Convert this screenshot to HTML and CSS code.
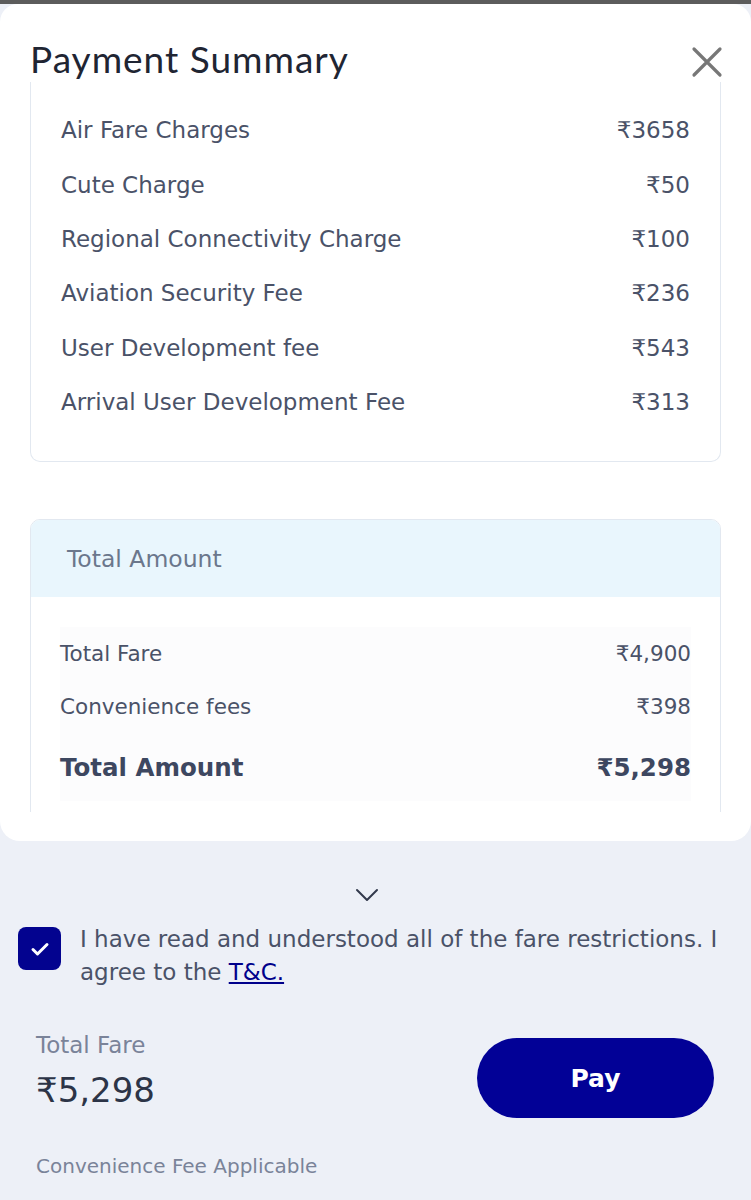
FILE: index.html
```html
<!DOCTYPE html>
<html lang="en">

<head>
    <meta charset="UTF-8">
    <meta name="viewport" content="width=device-width, initial-scale=1.0">
    <title>Payment Summary</title>
    <link rel="stylesheet" href="styles.css">
</head>

<body>
    <div class="dim"></div>
    <div class="sheet">
        <div class="sheet-head">
            <h1 class="sheet-title">Payment Summary</h1>
            <button class="close-btn" aria-label="Close">
                <svg width="32" height="32" viewBox="0 0 32 32">
                    <path d="M3 3L29 29M29 3L3 29" stroke="#777" stroke-width="3.2" stroke-linecap="round" fill="none" />
                </svg>
            </button>
        </div>
        <div class="sheet-scroll">
            <div class="card card-charges">
                <div class="row"><span>Air Fare Charges</span><span>₹3658</span></div>
                <div class="row"><span>Cute Charge</span><span>₹50</span></div>
                <div class="row"><span>Regional Connectivity Charge</span><span>₹100</span></div>
                <div class="row"><span>Aviation Security Fee</span><span>₹236</span></div>
                <div class="row"><span>User Development fee</span><span>₹543</span></div>
                <div class="row"><span>Arrival User Development Fee</span><span>₹313</span></div>
            </div>
            <div class="card card-total">
                <div class="card-total-head">Total Amount</div>
                <div class="card-total-body">
                    <div class="total-box">
                        <div class="row row-sm"><span>Total Fare</span><span>₹4,900</span></div>
                        <div class="row row-sm"><span>Convenience fees</span><span>₹398</span></div>
                        <div class="row row-strong"><span>Total Amount</span><span>₹5,298</span></div>
                    </div>
                </div>
            </div>
        </div>
    </div>

    <div class="footer">
        <div class="chevron">
            <svg width="24" height="14" viewBox="0 0 24 14">
                <path d="M2 2L12 12L22 2" stroke="#333a4d" stroke-width="2" fill="none" stroke-linecap="round" stroke-linejoin="round" />
            </svg>
        </div>
        <label class="agree">
            <span class="checkbox">
                <svg width="22" height="18" viewBox="0 0 22 18">
                    <path d="M4 9.5L8.5 14L18 4.5" stroke="#fff" stroke-width="3" fill="none" stroke-linecap="round" stroke-linejoin="round" />
                </svg>
            </span>
            <span class="agree-text">I have read and understood all of the fare restrictions. I agree to the <a href="#">T&amp;C.</a></span>
        </label>
        <div class="pay-bar">
            <div class="pay-info">
                <div class="pay-label">Total Fare</div>
                <div class="pay-amount">₹5,298</div>
            </div>
            <button class="pay-btn">Pay</button>
        </div>
        <div class="fee-note">Convenience Fee Applicable</div>
    </div>
</body>

</html>
```

FILE: styles.css
```css
* {
    margin: 0;
    padding: 0;
    box-sizing: border-box;
}

body {
    background: #edf0f7;
    font-family: "DejaVu Sans", "Noto Sans", sans-serif;
    color: #4a5268;
    overflow: hidden;
}

.dim {
    height: 4px;
    background: #5c5c5c;
}

.sheet {
    background: #fff;
    border-radius: 18px 18px 20px 20px;
    height: 837px;
    display: flex;
    flex-direction: column;
}

.sheet-head {
    display: flex;
    justify-content: space-between;
    align-items: flex-start;
    padding: 30px 28px 0 30px;
    height: 78px;
}

.sheet-title {
    font-family: Lato, sans-serif;
    font-weight: 400;
    font-size: 37px;
    line-height: 50px;
    color: #1f2533;
    letter-spacing: 1px;
}

.close-btn {
    border: none;
    background: none;
    padding: 0;
    margin-top: 12px;
    width: 32px;
    height: 32px;
}

.sheet-scroll {
    height: 730px;
    overflow: hidden;
    padding: 0 30px;
}

.card {
    border: 1px solid #e2e8f0;
    border-radius: 10px;
}

.card-charges {
    border-top: none;
    border-radius: 0 0 10px 10px;
    padding: 21px 30px 32px 30px;
}

.row {
    display: flex;
    justify-content: space-between;
    align-items: center;
    height: 54.4px;
    font-size: 23px;
}

.card-total {
    margin-top: 57px;
    overflow: hidden;
}

.card-total-head {
    background: #e9f6fd;
    height: 77px;
    display: flex;
    align-items: center;
    padding-left: 36px;
    font-size: 23.5px;
    color: #6b778c;
}

.card-total-body {
    padding: 30px 29px 40px 29px;
}

.total-box {
    background: #fcfcfd;
}

.row-sm {
    font-size: 21.5px;
    height: 54px;
}

.row-sm:first-child {
    height: 52px;
}

.row-strong {
    font-size: 24.5px;
    font-weight: 700;
    color: #3d4760;
    height: 68px;
}

.footer {
    padding: 0 18px;
}

.chevron {
    display: flex;
    justify-content: center;
    padding: 47px 0 0 0;
    height: 86px;
    margin-left: -18px;
}

.agree {
    display: flex;
    gap: 19px;
    align-items: flex-start;
}

.checkbox {
    flex: none;
    width: 43px;
    height: 43px;
    border-radius: 8px;
    background: #03038f;
    display: flex;
    align-items: center;
    justify-content: center;
}

.agree-text {
    font-size: 23px;
    line-height: 33px;
    margin-top: -4px;
}

.agree-text a {
    color: #00008b;
    text-underline-offset: 2px;
}

.pay-bar {
    display: flex;
    justify-content: space-between;
    align-items: center;
    padding: 49px 19px 0 18px;
}

.pay-info {
    margin-top: -12px;
}

.pay-label {
    font-size: 23px;
    color: #7a8399;
    line-height: 30px;
}

.pay-amount {
    font-size: 34px;
    color: #2c3447;
    line-height: 48px;
    margin-top: 6px;
}

.pay-btn {
    width: 237px;
    height: 80px;
    border: none;
    border-radius: 40px;
    background: #020196;
    color: #fff;
    font-family: "DejaVu Sans", sans-serif;
    font-weight: 700;
    font-size: 25px;
}

.fee-note {
    padding: 36px 0 0 18px;
    font-size: 20px;
    color: #7a8399;
}
```
